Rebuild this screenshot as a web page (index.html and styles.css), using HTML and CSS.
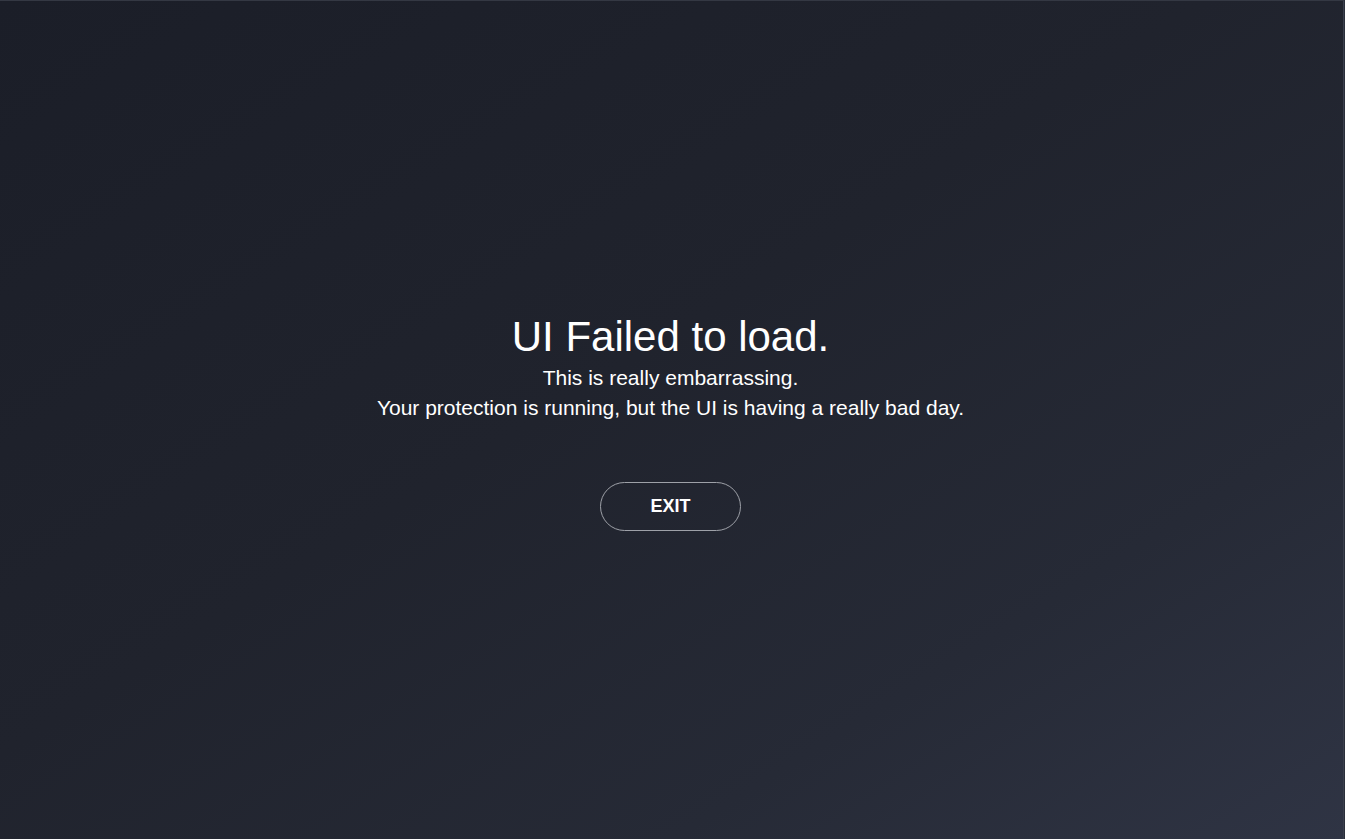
FILE: index.html
```html
<!DOCTYPE html>
<html lang="en">
<head>
<meta charset="utf-8">
<title>UI Failed to load</title>
<link rel="stylesheet" href="styles.css">
</head>
<body>
<main class="screen">
  <section class="error">
    <h1 class="error-title">UI Failed to load.</h1>
    <p class="error-text">This is really embarrassing.</p>
    <p class="error-text">Your protection is running, but the UI is having a really bad day.</p>
    <button class="exit-btn" type="button">EXIT</button>
  </section>
</main>
</body>
</html>
```

FILE: styles.css
```css
html, body {
  margin: 0;
  padding: 0;
  height: 100%;
}

body {
  font-family: "Liberation Sans", Arial, sans-serif;
  color: #ffffff;
  background: #2a2e3a;
}

.screen {
  box-sizing: border-box;
  height: 100vh;
  border-top: 1px solid #343843;
  border-right: 1px solid #3a3f4c;
  margin-right: 1px;
  padding-right: 2px;
  background: linear-gradient(to bottom right, #1b1e28 0%, #20232d 45%, #262a36 75%, #2f3444 100%);
  display: flex;
  align-items: center;
  justify-content: center;
}

.error {
  display: flex;
  flex-direction: column;
  align-items: center;
  margin-top: 3px;
}

.error-title {
  margin: 0 0 2px;
  font-size: 42px;
  font-weight: 400;
  line-height: 48px;
}

.error-text {
  margin: 0;
  font-size: 21px;
  line-height: 30px;
}

.exit-btn {
  margin-top: 59px;
  width: 141px;
  height: 49px;
  border: 1.5px solid #9ea1a8;
  border-radius: 25px;
  background: transparent;
  color: #ffffff;
  font-family: "Liberation Sans", Arial, sans-serif;
  font-size: 18px;
  font-weight: 700;
  cursor: pointer;
}
```
